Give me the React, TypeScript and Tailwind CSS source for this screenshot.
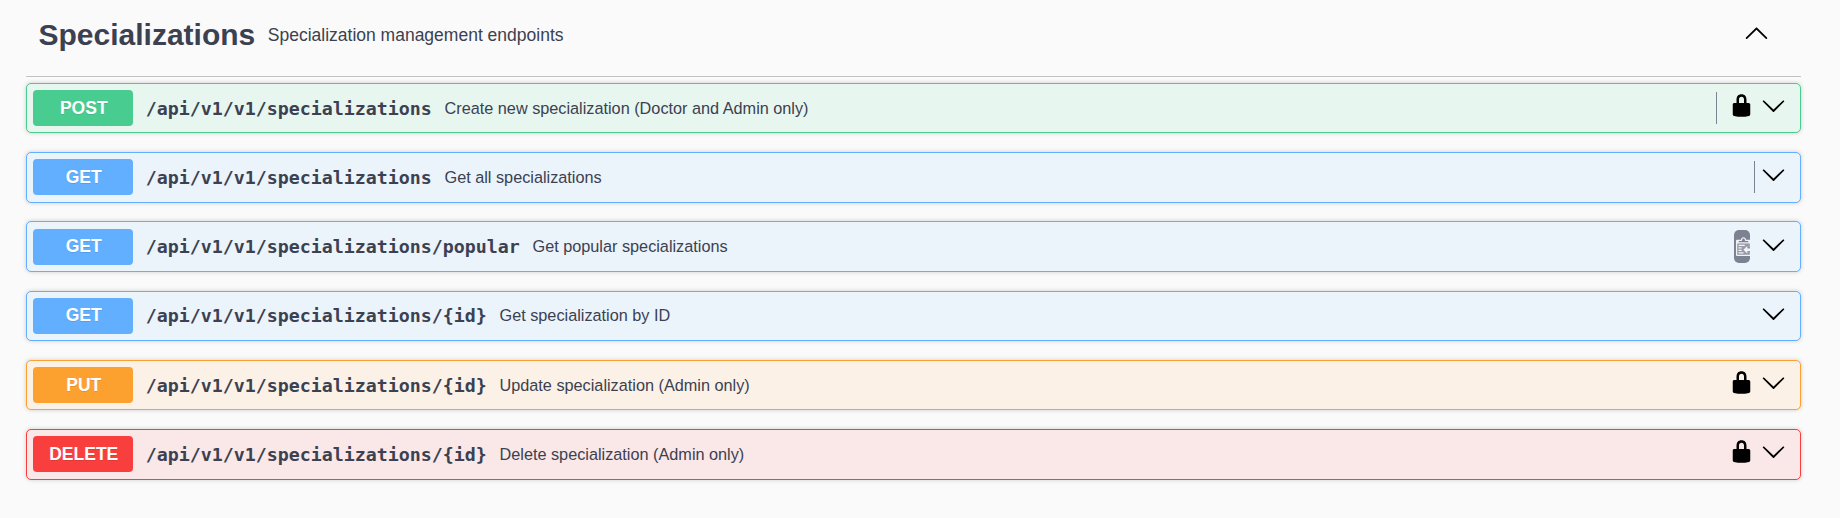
import React from "react";

type Method = "POST" | "GET" | "PUT" | "DELETE";

interface Endpoint {
  method: Method;
  path: string;
  summary: string;
  locked?: boolean;
  copy?: "line" | "button";
  box: string;
  raised?: boolean;
}

const tones: Record<Method, { row: string; badge: string }> = {
  POST: { row: "border-[#49cc90] bg-[#e8f6f0]", badge: "bg-[#49cc90]" },
  GET: { row: "border-[#61affe] bg-[#ebf3fb]", badge: "bg-[#61affe]" },
  PUT: { row: "border-[#fca130] bg-[#fbf1e6]", badge: "bg-[#fca130]" },
  DELETE: { row: "border-[#f93e3e] bg-[#fae7e7]", badge: "bg-[#f93e3e]" },
};

const base = "/api/v1/v1/specializations";

const endpoints: Endpoint[] = [
  { method: "POST", path: base, summary: "Create new specialization (Doctor and Admin only)", locked: true, copy: "line", box: "h-[50px] mb-[19px] pt-[6px]" },
  { method: "GET", path: base, summary: "Get all specializations", copy: "line", box: "h-[51px] mb-[18px] pt-[6px]" },
  { method: "GET", path: base + "/popular", summary: "Get popular specializations", copy: "button", box: "h-[51px] mb-[19px] pt-[7px]", raised: true },
  { method: "GET", path: base + "/{id}", summary: "Get specialization by ID", box: "h-[50px] mb-[19px] pt-[6px]", raised: true },
  { method: "PUT", path: base + "/{id}", summary: "Update specialization (Admin only)", locked: true, box: "h-[50px] mb-[19px] pt-[6px]" },
  { method: "DELETE", path: base + "/{id}", summary: "Delete specialization (Admin only)", locked: true, box: "h-[51px] pt-[6px]" },
];

function ChevronDown() {
  return (
    <svg viewBox="0 0 20 20" className="h-[25px] w-[25px] shrink-0 fill-black">
      <path d="M17.418 6.109c.272-.268.709-.268.979 0s.271.701 0 .969l-7.908 7.83c-.27.268-.707.268-.979 0l-7.908-7.83c-.27-.268-.27-.701 0-.969.271-.268.709-.268.979 0L10 13.25l7.418-7.141z" />
    </svg>
  );
}

function ChevronUp() {
  return (
    <svg viewBox="0 0 20 20" className="h-[25px] w-[25px] shrink-0 fill-black">
      <path d="M17.418 14.908c.272.268.709.268.979 0s.271-.701 0-.969l-7.908-7.83c-.27-.268-.707-.268-.979 0l-7.908 7.83c-.27.268-.27.701 0 .969.271.268.709.268.979 0L10 7.767l7.418 7.141z" />
    </svg>
  );
}

function Lock() {
  return (
    <svg viewBox="0 0 20 20" className="h-[25px] w-[25px] shrink-0 fill-black">
      <path d="M15.8 8H14V5.6C14 2.703 12.665 1 10 1 7.334 1 6 2.703 6 5.6V8H4c-.553 0-1 .646-1 1.199V17c0 .549.428 1.139.951 1.307l1.197.387C5.672 18.861 6.55 19 7.1 19h5.8c.549 0 1.428-.139 1.951-.307l1.196-.387c.524-.167.953-.757.953-1.306V9.199C17 8.646 16.352 8 15.8 8zM12 8H8V5.199C8 3.754 8.797 3 10 3c1.203 0 2 .754 2 2.199V8z" />
    </svg>
  );
}

function CopyButton() {
  return (
    <span className="mr-[11px] mb-[2px] flex h-[33px] w-4 shrink-0 items-center overflow-hidden rounded-[5px] bg-[#7d8293] pl-[2px]">
      <svg viewBox="0 0 16 16" className="h-5 w-5 shrink-0">
        <path fill="#ffffff" fillOpacity="0.2" d="M1 6h10v9H1z" />
        <path
          fill="#ffffff"
          fillOpacity="0.9"
          fillRule="evenodd"
          d="M2 13h4v1H2v-1zm5-6H2v1h5V7zm2 3V8l-3 3 3 3v-2h5v-2H9zM4.500 9H2v1h2.500V9zM2 12h2.500v-1H2v1zm9 1h1v2c-.02.28-.11.52-.3.7-.19.18-.42.28-.7.3H1c-.55 0-1-.45-1-1V4c0-.55.45-1 1-1h3c0-1.110.89-2 2-2 1.110 0 2 .89 2 2h3c.55 0 1 .45 1 1v5h-1V6H1v9h10v-2zM2 5h8c0-.55-.45-1-1-1H8c-.55 0-1-.45-1-1s-.45-1-1-1-1 .45-1 1-.45 1-1 1H3c-.55 0-1 .45-1 1z"
        />
      </svg>
    </span>
  );
}

function Row({ item }: { item: Endpoint }) {
  const tone = tones[item.method];
  return (
    <div className={`flex items-start rounded-[5px] border pl-[6px] pr-[14px] shadow-[0_0_4px_rgba(0,0,0,0.19)] ${tone.row} ${item.box}`}>
      <span className={`h-9 w-[100px] shrink-0 rounded-[4px] pl-[1.5px] text-center text-[17.5px] font-bold text-white [text-shadow:0_1px_0_rgba(0,0,0,0.1)] ${item.raised ? "leading-[34px]" : "leading-[36px]"} ${tone.badge}`}>
        {item.method}
      </span>
      <span className={`ml-[12.8px] font-['DejaVu_Sans_Mono',monospace] text-[18.27px] font-bold whitespace-pre ${item.raised ? "leading-[35px]" : "leading-[37px]"}`}>{item.path}</span>
      <span className={`ml-[12.8px] text-[16.25px] whitespace-pre ${item.raised ? "leading-[34px]" : "leading-[36px]"}`}>{item.summary}</span>
      <span className="ml-auto flex h-9 items-center">
        {item.copy === "line" && <span className={`h-8 w-px bg-[#7d8293] ${item.locked ? "mr-[12px]" : "mr-[6px]"}`} />}
        {item.copy === "button" && <CopyButton />}
        {item.locked && <span className="mr-[7px] -mt-[5px]"><Lock /></span>}
        <span className="-mt-[5px]"><ChevronDown /></span>
      </span>
    </div>
  );
}

export default function App() {
  return (
    <main className="h-[518px] w-[1840px] overflow-hidden bg-[#fafafa] pl-[26px] pr-[39px] font-['Liberation_Sans',Arial,sans-serif] text-[#3b4151]">
      <header className="mb-[6px] flex h-[77px] border-b border-[#3b4151]/30 pr-[32px] pl-[12.5px]">
        <h2 className="text-[30px] leading-[69px] font-bold">Specializations</h2>
        <p className="ml-[12.5px] text-[17.5px] leading-[70px]">Specialization management endpoints</p>
        <span className="mt-[20px] ml-auto"><ChevronUp /></span>
      </header>
      <section>
        {endpoints.map((item) => (
          <Row key={item.method + item.summary} item={item} />
        ))}
      </section>
    </main>
  );
}
